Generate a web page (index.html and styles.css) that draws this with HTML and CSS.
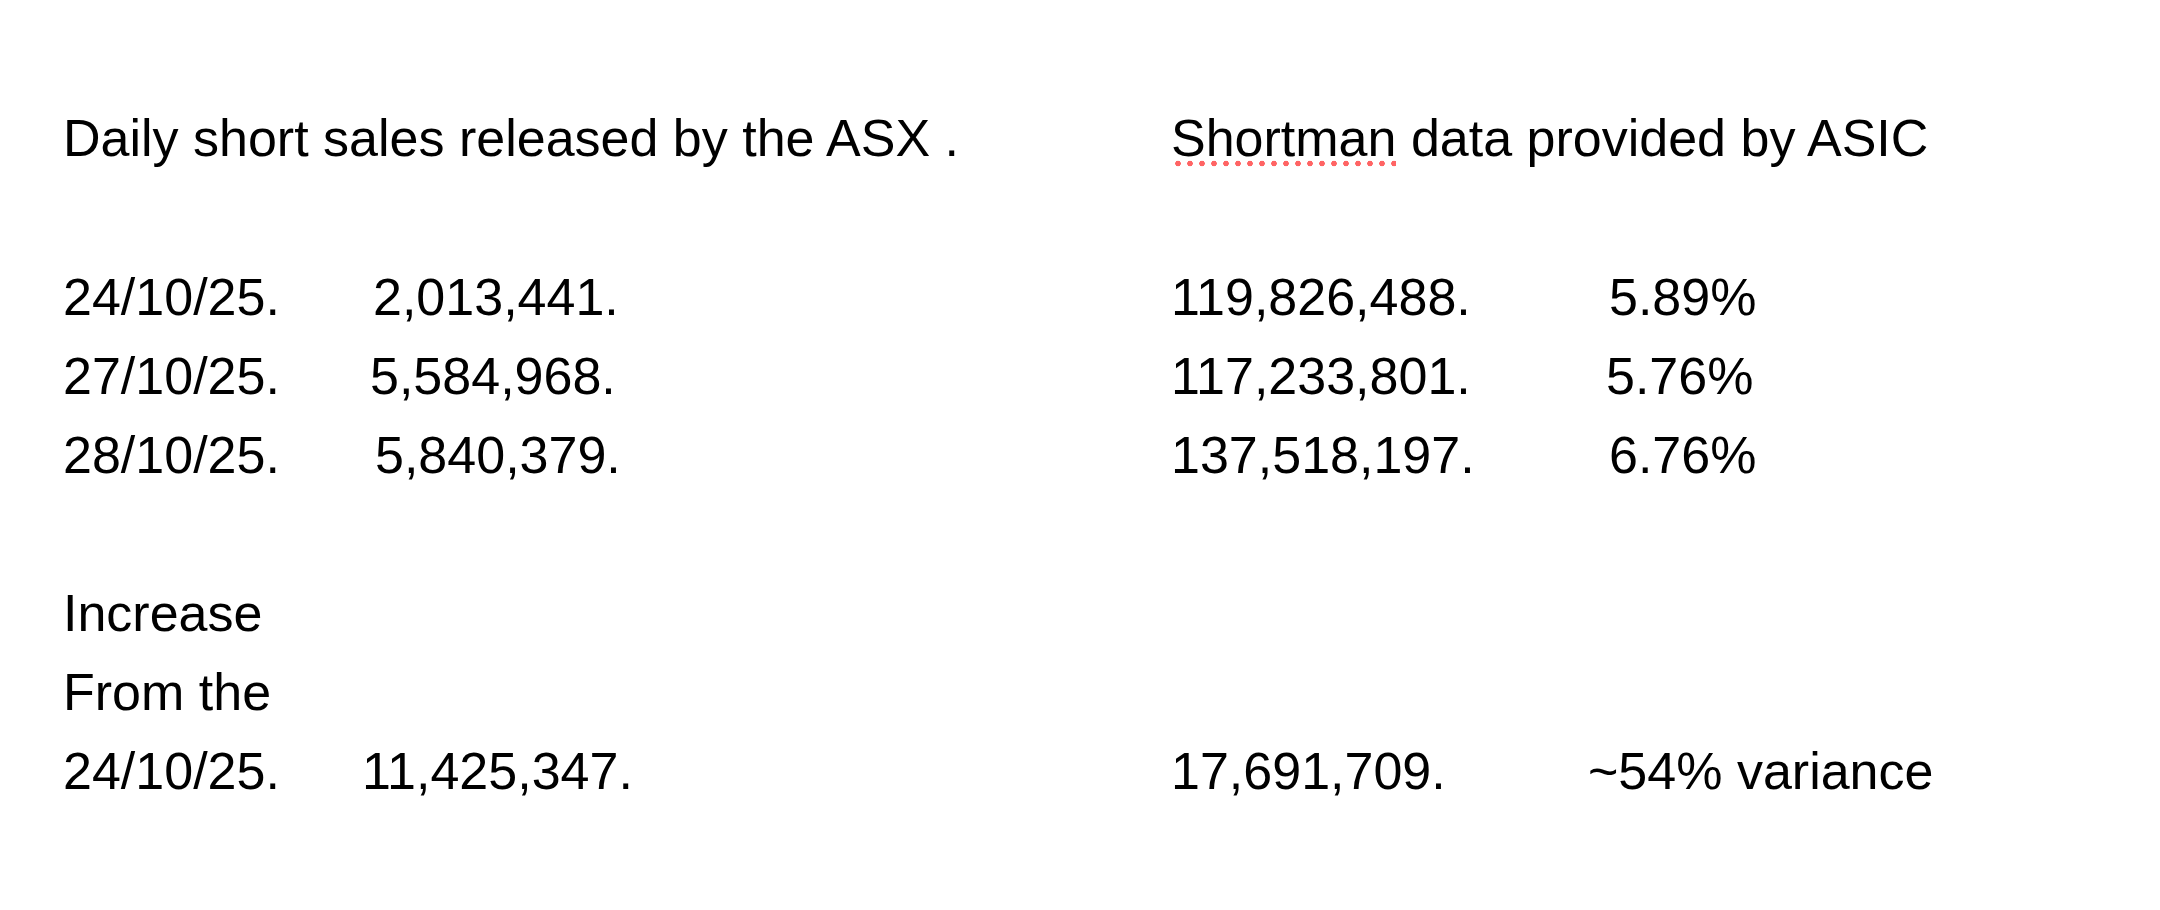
FILE: index.html
```html
<!DOCTYPE html>
<html lang="en">
<head>
<meta charset="utf-8">
<title>Short sales note</title>
<link rel="stylesheet" href="styles.css">
</head>
<body>
<main class="note">
  <div class="sheet">
    <div class="cell span-left">Daily short sales released by the ASX .</div>
    <div class="cell span-right"><span class="misspelled">Shortman</span> data provided by ASIC</div>

    <div class="blank"></div>

    <div class="cell">24/10/25.</div>
    <div class="cell">2,013,441.</div>
    <div class="cell">119,826,488.</div>
    <div class="cell">5.89%</div>

    <div class="cell">27/10/25.</div>
    <div class="cell nudge-l">5,584,968.</div>
    <div class="cell">117,233,801.</div>
    <div class="cell nudge-l">5.76%</div>

    <div class="cell">28/10/25.</div>
    <div class="cell nudge-r">5,840,379.</div>
    <div class="cell">137,518,197.</div>
    <div class="cell">6.76%</div>

    <div class="blank"></div>

    <div class="cell full">Increase</div>
    <div class="cell full">From the</div>

    <div class="cell">24/10/25.</div>
    <div class="cell pull-sm">11,425,347.</div>
    <div class="cell">17,691,709.</div>
    <div class="cell pull-lg">~54% variance</div>
  </div>
</main>
</body>
</html>
```

FILE: styles.css
```css
html, body {
  margin: 0;
  padding: 0;
  background: #ffffff;
}

body {
  font-family: "Liberation Sans", Arial, sans-serif;
  color: #000000;
  width: 2160px;
  height: 910px;
  overflow: hidden;
}

.note {
  padding: 99px 0 0 63px;
}

.sheet {
  display: grid;
  grid-template-columns: 310px 798px 438px 1fr;
  font-size: 52px;
  line-height: 79px;
}

.cell {
  white-space: nowrap;
}

.span-left {
  grid-column: 1 / 3;
}

.span-right {
  grid-column: 3 / 5;
}

.full {
  grid-column: 1 / -1;
}

.blank {
  grid-column: 1 / -1;
  height: 79.5px;
}

.nudge-l {
  margin-left: -3px;
}

.nudge-r {
  margin-left: 2px;
}

.pull-sm {
  margin-left: -11px;
}

.pull-lg {
  margin-left: -21px;
}

.misspelled {
  background-image: radial-gradient(circle, #ff6464 0, #ff6464 2.5px, rgba(255, 100, 100, 0) 3.1px);
  background-size: 12px 7px;
  background-repeat: repeat-x;
  background-position: 1px 100%;
}
```
